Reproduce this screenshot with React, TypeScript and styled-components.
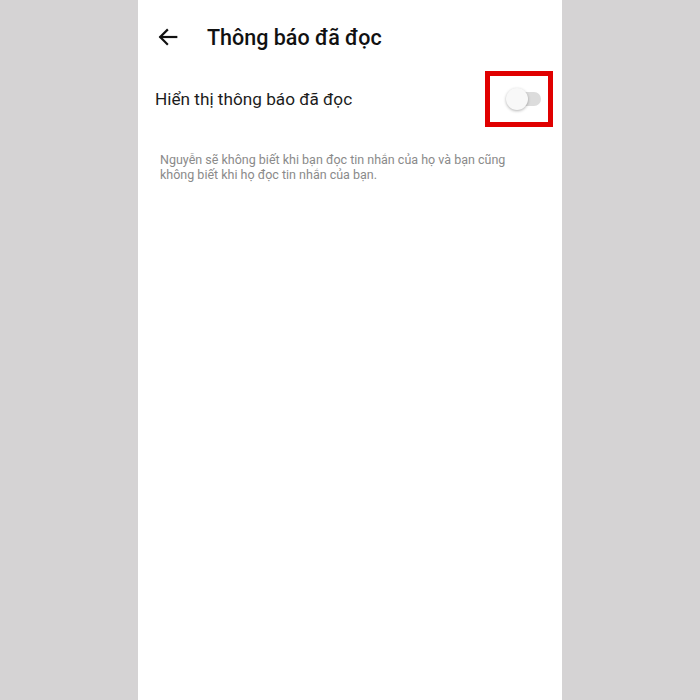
import React, { useState } from 'react';
import styled, { createGlobalStyle } from 'styled-components';

const GlobalStyle = createGlobalStyle`
  html, body {
    margin: 0;
    padding: 0;
    background: #d5d3d4;
    font-family: Roboto, "Noto Sans", sans-serif;
  }
`;

const Page = styled.div`
  display: flex;
  justify-content: center;
  height: 700px;
`;

const Screen = styled.div`
  width: 424px;
  height: 700px;
  background: #ffffff;
  display: flex;
  flex-direction: column;
`;

const Header = styled.div`
  display: flex;
  align-items: center;
  height: 74px;
  padding-left: 18px;
`;

const BackButton = styled.button`
  display: flex;
  align-items: center;
  justify-content: center;
  width: 24px;
  height: 24px;
  padding: 0;
  border: none;
  background: none;
  margin-right: 27px;
`;

const Title = styled.h1`
  margin: 0;
  font-size: 21.5px;
  font-weight: 500;
  color: #111;
`;

const SettingRow = styled.div`
  display: flex;
  align-items: center;
  justify-content: space-between;
  height: 50px;
  padding: 0 9px 0 17px;
`;

const Label = styled.span`
  font-size: 17.2px;
  color: #1c1c1c;
`;

const Highlight = styled.div`
  box-sizing: border-box;
  display: flex;
  align-items: center;
  width: 68px;
  height: 56px;
  padding-left: 20px;
  border: 5px solid #e00000;
`;

const Track = styled.div<{ $on: boolean }>`
  position: relative;
  width: 31px;
  height: 14px;
  border-radius: 7px;
  background: ${(p) => (p.$on ? '#9fc3f5' : '#dcdcdc')};
  cursor: pointer;
`;

const Thumb = styled.div<{ $on: boolean }>`
  position: absolute;
  top: -4px;
  left: ${(p) => (p.$on ? '13px' : '-4px')};
  width: 22px;
  height: 22px;
  border-radius: 50%;
  background: ${(p) => (p.$on ? '#1877f2' : '#f8f8f8')};
  box-shadow: 0 1px 3px rgba(0, 0, 0, 0.3);
`;

const Description = styled.p`
  margin: 28px 0 0;
  padding: 0 40px 0 22px;
  font-size: 12.5px;
  line-height: 15px;
  color: #8a8a8a;
`;

const App: React.FC = () => {
  const [on, setOn] = useState(false);

  return (
    <Page>
      <GlobalStyle />
      <Screen>
        <Header>
          <BackButton aria-label="Back">
            <svg width="22" height="22" viewBox="0 0 24 24" fill="none" stroke="#111" strokeWidth="2.4" strokeLinecap="square">
              <path d="M21 12H4" />
              <path d="M11 4.5L3.5 12l7.5 7.5" />
            </svg>
          </BackButton>
          <Title>Thông báo đã đọc</Title>
        </Header>
        <SettingRow>
          <Label>Hiển thị thông báo đã đọc</Label>
          <Highlight>
            <Track $on={on} onClick={() => setOn(!on)}>
              <Thumb $on={on} />
            </Track>
          </Highlight>
        </SettingRow>
        <Description>
          Nguyễn sẽ không biết khi bạn đọc tin nhắn của họ và bạn cũng không biết khi họ đọc tin nhắn của bạn.
        </Description>
      </Screen>
    </Page>
  );
};

export default App;
